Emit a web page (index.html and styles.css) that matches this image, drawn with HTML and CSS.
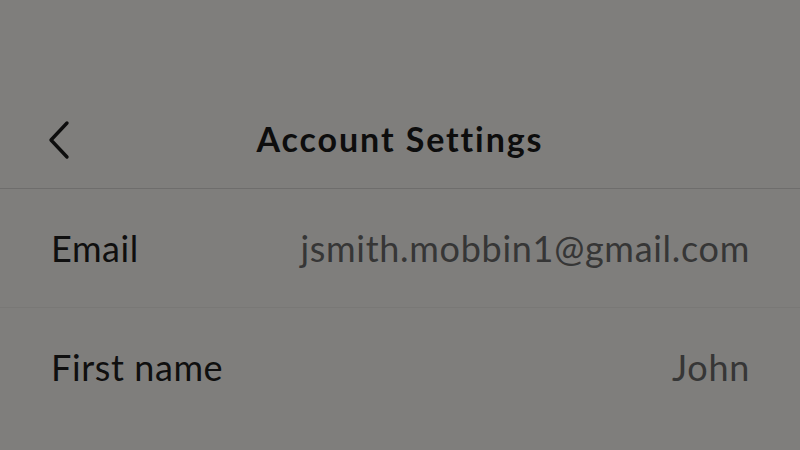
FILE: index.html
```html
<!DOCTYPE html>
<html lang="en">
<head>
<meta charset="utf-8">
<title>Account Settings</title>
<link rel="stylesheet" href="styles.css">
</head>
<body>
<div class="screen">
  <header class="topbar">
    <div class="back">
      <svg class="back-icon" width="26" height="40" viewBox="0 0 26 40" aria-hidden="true">
        <path d="M21 3 L5 20 L21 37" fill="none" stroke="#0d0d0d" stroke-width="3.4" stroke-linecap="round" stroke-linejoin="round"/>
      </svg>
    </div>
    <h1 class="title">Account Settings</h1>
    <div class="spacer"></div>
  </header>
  <div class="row">
    <span class="label">Email</span>
    <span class="value">jsmith.mobbin1@gmail.com</span>
  </div>
  <div class="row last">
    <span class="label">First name</span>
    <span class="value">John</span>
  </div>
</div>
</body>
</html>
```
FILE: styles.css
```css
html, body {
  margin: 0;
  padding: 0;
  background: #7f7e7c;
}
body {
  font-family: Lato, "Noto Sans", sans-serif;
  width: 800px;
  height: 450px;
  overflow: hidden;
}
.screen {
  padding-top: 92px;
}
.topbar {
  height: 96px;
  display: grid;
  grid-template-columns: 1fr auto 1fr;
  align-items: center;
  border-bottom: 1px solid #6e6d6c;
}
.back {
  padding-left: 46px;
  display: flex;
  align-items: center;
}
.back-icon {
  display: block;
}
.title {
  margin: 0;
  font-size: 34px;
  font-weight: 700;
  color: #0d0d0d;
  line-height: 1;
  letter-spacing: 1.9px;
  padding-bottom: 2px;
}
.row {
  height: 118px;
  display: flex;
  align-items: center;
  justify-content: space-between;
  padding: 0 50px 0 51px;
  border-bottom: 1px solid #797876;
}
.row.last {
  border-bottom: none;
}
.label {
  font-size: 36px;
  color: #0f0f0f;
  letter-spacing: 0.6px;
}
.value {
  font-size: 36px;
  color: #363636;
  letter-spacing: 0.7px;
}
```
